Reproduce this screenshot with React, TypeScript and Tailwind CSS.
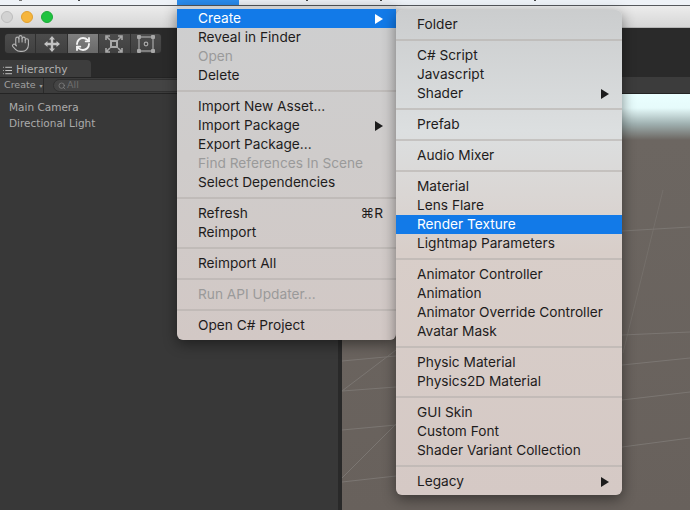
import { Hand, List, RefreshCw, Search } from "lucide-react";

type MenuItem = {
  label?: string;
  off?: boolean;
  active?: boolean;
  arrow?: boolean;
  hint?: string;
};

const mainMenu: MenuItem[] = [
  { label: "Create", active: true, arrow: true },
  { label: "Reveal in Finder" },
  { label: "Open", off: true },
  { label: "Delete" },
  {},
  { label: "Import New Asset..." },
  { label: "Import Package", arrow: true },
  { label: "Export Package..." },
  { label: "Find References In Scene", off: true },
  { label: "Select Dependencies" },
  {},
  { label: "Refresh", hint: "⌘R" },
  { label: "Reimport" },
  {},
  { label: "Reimport All" },
  {},
  { label: "Run API Updater...", off: true },
  {},
  { label: "Open C# Project" },
];

const subMenu: MenuItem[] = [
  { label: "Folder" },
  {},
  { label: "C# Script" },
  { label: "Javascript" },
  { label: "Shader", arrow: true },
  {},
  { label: "Prefab" },
  {},
  { label: "Audio Mixer" },
  {},
  { label: "Material" },
  { label: "Lens Flare" },
  { label: "Render Texture", active: true },
  { label: "Lightmap Parameters" },
  {},
  { label: "Animator Controller" },
  { label: "Animation" },
  { label: "Animator Override Controller" },
  { label: "Avatar Mask" },
  {},
  { label: "Physic Material" },
  { label: "Physics2D Material" },
  {},
  { label: "GUI Skin" },
  { label: "Custom Font" },
  { label: "Shader Variant Collection" },
  {},
  { label: "Legacy", arrow: true },
];

const Arrow = ({ active }: { active?: boolean }) => (
  <svg width="8" height="10" viewBox="0 0 8 10" className="shrink-0">
    <path d="M0 0L8 5L0 10Z" fill={active ? "#ffffff" : "#1c1c1c"} />
  </svg>
);

const Rows = ({ items }: { items: MenuItem[] }) => (
  <>
    {items.map((item, i) =>
      item.label ? (
        <div
          key={i}
          className={`flex h-[19px] items-center justify-between pl-[21px] pr-[13px] text-[13.7px] leading-[19px] ${
            item.active ? "bg-[#127ae8] text-white" : item.off ? "text-[#9a9a9a]" : "text-[#1e1c1c]"
          }`}
        >
          <span>{item.label}</span>
          {item.arrow && <Arrow active={item.active} />}
          {item.hint && <span>{item.hint}</span>}
        </div>
      ) : (
        <div key={i} className="flex h-[12px] items-center">
          <div className="h-[2px] w-full bg-[#b5b0ae]/60" />
        </div>
      ),
    )}
  </>
);

const MoveIcon = () => (
  <svg width="16" height="16" viewBox="0 0 16 16" fill="#c2c2c2" stroke="#c2c2c2">
    <path d="M3 8H13M8 3V13" strokeWidth="2.4" fill="none" />
    <path d="M8 0L11 3.5H5ZM8 16L11 12.5H5ZM0 8L3.5 5V11ZM16 8L12.5 5V11Z" stroke="none" />
  </svg>
);

const ScaleIcon = () => (
  <svg width="18" height="18" viewBox="0 0 18 18" fill="none" stroke="#a8a8a8" strokeWidth="1.6">
    <rect x="6" y="6" width="6" height="6" strokeWidth="2" />
    <path d="M1 5V1H5M1 1L5 5M13 1H17V5M17 1L13 5M1 13V17H5M1 17L5 13M17 13V17H13M17 17L13 13" />
  </svg>
);

const RectIcon = () => (
  <svg width="18" height="18" viewBox="0 0 18 18" fill="none" stroke="#a8a8a8">
    <rect x="2" y="2" width="14" height="14" strokeWidth="1.2" />
    <circle cx="9" cy="9" r="1.8" strokeWidth="1.2" />
    <g fill="#a8a8a8" stroke="none">
      <rect x="0" y="0" width="4" height="4" rx="1" />
      <rect x="14" y="0" width="4" height="4" rx="1" />
      <rect x="0" y="14" width="4" height="4" rx="1" />
      <rect x="14" y="14" width="4" height="4" rx="1" />
    </g>
  </svg>
);

const ToolButton = ({ children, on }: { children: React.ReactNode; on?: boolean }) => (
  <div
    className={`flex h-full flex-1 items-center justify-center border-r border-[#303030] last:border-r-0 ${
      on ? "bg-gradient-to-b from-[#7f7f7f] to-[#696969]" : "bg-gradient-to-b from-[#4c4c4c] to-[#404040]"
    }`}
  >
    {children}
  </div>
);

const App = () => {
  return (
    <div className="relative flex h-[510px] w-[690px] flex-col overflow-hidden bg-[#383838] font-['Inter',sans-serif]">
      {/* mac menu bar, only the bottom edge is in frame */}
      <div className="relative h-[6px] shrink-0 border-b border-[#55585c] bg-[#eef2f7]">
        <div className="absolute left-[177px] top-0 h-[5px] w-[62px] bg-[#2a8df0]" />
        <div className="absolute left-[19px] top-0 h-[1px] w-[3px] bg-[#777]" />
        <div className="absolute left-[78px] top-0 h-[1px] w-[2px] bg-[#444]" />
        <div className="absolute left-[306px] top-0 h-[1px] w-[2px] bg-[#444]" />
        <div className="absolute left-[380px] top-0 h-[1px] w-[2px] bg-[#444]" />
        <div className="absolute left-[534px] top-0 h-[1px] w-[2px] bg-[#444]" />
      </div>

      {/* window title bar */}
      <div className="flex h-[22px] shrink-0 items-center gap-2 border-b border-[#b5b5b5] bg-gradient-to-b from-[#ececec] to-[#d6d6d6] pl-[1px]">
        <div className="size-3 rounded-full border border-[#bdbdbd] bg-[#d2d2d2]" />
        <div className="size-3 rounded-full border border-[#e0a030] bg-[#f6b53c]" />
        <div className="size-3 rounded-full border border-[#1caa38] bg-[#1fc340]" />
      </div>

      {/* toolbar */}
      <div className="h-[32px] shrink-0 bg-[#2a2a2a] pl-1 pt-[5px]">
        <div className="flex h-[21px] w-[158px] overflow-hidden rounded-[4px] border border-[#2c2c2c]">
          <ToolButton>
            <Hand size={19} color="#b5b5b5" strokeWidth={1.4} />
          </ToolButton>
          <ToolButton>
            <MoveIcon />
          </ToolButton>
          <ToolButton on>
            <RefreshCw size={16} color="#f2f2f2" strokeWidth={2.8} />
          </ToolButton>
          <ToolButton>
            <ScaleIcon />
          </ToolButton>
          <ToolButton>
            <RectIcon />
          </ToolButton>
        </div>
      </div>

      {/* tab strip */}
      <div className="flex h-[17px] shrink-0 bg-[#2a2a2a]">
        <div className="flex h-full w-[91px] items-center gap-[3px] rounded-tr-[4px] bg-[#3d3d3d] pl-[2px] pt-[3px] font-['DejaVu_Sans',sans-serif] text-[10.7px] text-[#b0b0b0]">
          <List size={11} color="#d0d0d0" />
          <span>Hierarchy</span>
        </div>
      </div>

      <div className="flex min-h-0 flex-1">
        {/* hierarchy panel */}
        <div className="flex w-[338px] shrink-0 flex-col font-['DejaVu_Sans',sans-serif]">
          <div className="flex h-[17px] shrink-0 items-center border-y border-[#242424] bg-[#3c3c3c]">
            <div className="flex w-[44px] items-center gap-1 border-r border-[#2a2a2a] pl-1 text-[9.5px] text-[#a0a0a0]">
              <span>Create</span>
              <span className="text-[6px]">▾</span>
            </div>
            <div className="ml-[9px] flex h-[13px] flex-1 items-center gap-[1px] rounded-l-full border border-[#303030] bg-[#444444] pl-1 text-[9.5px] text-[#6f6f6f]">
              <Search size={8} color="#888" />
              <span>All</span>
            </div>
          </div>
          <div className="flex flex-col pl-[9px] pt-[5px] text-[10.5px] leading-4 text-[#ababab]">
            <span>Main Camera</span>
            <span>Directional Light</span>
          </div>
        </div>

        <div className="w-[4px] shrink-0 bg-[#292929]" />

        {/* scene view */}
        <div className="flex min-w-0 flex-1 flex-col">
          <div className="h-[17px] shrink-0 border-b border-[#242424] bg-[#3c3c3c]" />
          <div className="relative flex-1 bg-[linear-gradient(to_bottom,#eaffff_0px,#e6fbfb_14px,#9fb0b0_30px,#6c6661_46px,#68615c_100%)]">
            <svg className="absolute inset-0" width="348" height="416" viewBox="342 94 348 416" fill="none" stroke="#7b7672" strokeWidth="1">
              <path d="M342 361L396 356M342 391L396 387M342 430L396 425M342 482L396 476M342 391L396 350M342 478L396 424" />
              <path d="M622 231L690 227M622 335L690 332M622 365L690 358M622 400L690 392M622 447L690 438" />
              <path d="M623 353L663 190" strokeOpacity="0.6" />
            </svg>
          </div>
        </div>
      </div>

      {/* context menu */}
      <div className="absolute left-[177px] top-[6px] w-[219px] rounded-b-[6px] bg-[linear-gradient(to_bottom,#cecfd0,#cfcccb_45%,#d2c8c5)] pb-[4.5px] pt-[3px] shadow-[0_4px_14px_rgba(0,0,0,0.45)]">
        <Rows items={mainMenu} />
      </div>

      {/* create submenu */}
      <div className="absolute left-[396px] top-[10px] w-[226px] rounded-[6px] bg-[linear-gradient(to_bottom,#cbcdce,#dcdfe0_25%,#d8cec9_50%,#d5c9c5)] pb-[4px] pt-[5px] shadow-[0_4px_14px_rgba(0,0,0,0.45)]">
        <Rows items={subMenu} />
      </div>
    </div>
  );
};

export default App;
